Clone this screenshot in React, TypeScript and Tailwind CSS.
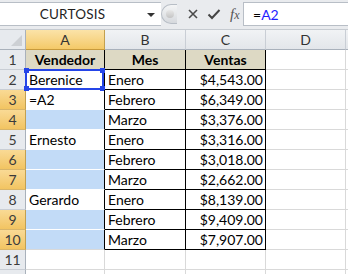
import React from "react";

type Row = {
  n: number;
  a: string;
  b: string;
  c: string;
  blue?: boolean;
  sel?: boolean;
};

const rows: Row[] = [
  { n: 2, a: "Berenice", b: "Enero", c: "$4,543.00" },
  { n: 3, a: "=A2", b: "Febrero", c: "$6,349.00", sel: true },
  { n: 4, a: "", b: "Marzo", c: "$3,376.00", blue: true, sel: true },
  { n: 5, a: "Ernesto", b: "Enero", c: "$3,316.00" },
  { n: 6, a: "", b: "Febrero", c: "$3,018.00", blue: true, sel: true },
  { n: 7, a: "", b: "Marzo", c: "$2,662.00", blue: true, sel: true },
  { n: 8, a: "Gerardo", b: "Enero", c: "$8,139.00" },
  { n: 9, a: "", b: "Febrero", c: "$9,409.00", blue: true, sel: true },
  { n: 10, a: "", b: "Marzo", c: "$7,907.00", blue: true, sel: true },
];

function RowHead({ n, sel }: { n: number | string; sel?: boolean }) {
  return (
    <div
      className={
        "w-[26px] shrink-0 h-full flex items-center justify-center border-r border-b text-[14px] text-[#3b3b3b] " +
        (sel
          ? "bg-gradient-to-b from-[#f9da95] to-[#f2c461] border-r-[#c2a050] border-b-[#d8b56a]"
          : "bg-[#e7eaee] border-r-[#a9b1bb] border-b-[#c9ced5]")
      }
    >
      {n}
    </div>
  );
}

export default function App() {
  return (
    <div
      className="w-[348px] h-[274px] overflow-hidden bg-white select-none"
      style={{ fontFamily: "Lato, 'Open Sans', sans-serif" }}
    >
      {/* formula bar */}
      <div className="h-[30px] bg-[#e9ebee] flex items-start pt-[2px] border-b border-[#c6cbd1]">
        <div className="w-[161px] h-[24px] bg-white border-y border-[#b8bec6] flex items-center relative">
          <span className="w-[145px] text-center text-[13.5px] text-[#1e1e1e] tracking-[0.2px]">
            CURTOSIS
          </span>
          <span className="absolute left-[147px] top-[10px] w-0 h-0 border-l-[4px] border-r-[4px] border-t-[4px] border-l-transparent border-r-transparent border-t-[#333]" />
        </div>
        <div className="w-[16px] h-[24px] flex items-center">
          <div className="w-[16px] h-[20px] rounded-l-full bg-gradient-to-b from-[#f4f5f6] to-[#d6d9dd] border border-[#b8bec6] border-r-0 flex items-center justify-center">
            <div className="w-[8px] h-[8px] rounded-full bg-gradient-to-b from-[#e8e8e8] to-[#c4c4c4]" />
          </div>
        </div>
        <div className="w-[66px] h-[24px] flex items-center">
          <svg width="12" height="12" viewBox="0 0 12 12" className="ml-[10px]">
            <path d="M2 2 L10 10 M10 2 L2 10" stroke="#4a4a4a" strokeWidth="1.6" />
          </svg>
          <svg width="14" height="12" viewBox="0 0 14 12" className="ml-[8px]">
            <path d="M1.5 6.5 L5 10 L12.5 2" stroke="#444" strokeWidth="2" fill="none" />
          </svg>
          <span
            className="ml-[9px] text-[15px] italic text-[#555] leading-none"
            style={{ fontFamily: "'Liberation Serif', serif" }}
          >
            f<span className="text-[12px]">x</span>
          </span>
        </div>
        <div className="flex-1 h-[24px] bg-white border border-r-0 border-[#b8bec6] flex items-center pl-[9px] text-[14px]">
          <span className="text-black">=</span>
          <span className="text-[#1f1fff]">A2</span>
        </div>
      </div>

      {/* column headers */}
      <div className="h-[20px] flex">
        <div className="w-[26px] shrink-0 h-full bg-[#e7eaee] border-r border-b border-[#a9b1bb] relative">
          <span className="absolute right-[3px] bottom-[3px] w-[11px] h-[11px] bg-[#cdd0d4] [clip-path:polygon(100%_0,100%_100%,0_100%)]" />
        </div>
        <div className="w-[79px] h-full flex items-center justify-center border-r border-b border-r-[#c2a050] border-b-[#c79a3c] bg-gradient-to-b from-[#fbe3a8] to-[#f4c967] text-[14px] text-[#333]">
          A
        </div>
        <div className="w-[81px] h-full flex items-center justify-center border-r border-b border-r-[#c9ced5] border-b-[#a9b1bb] bg-gradient-to-b from-[#f1f3f5] to-[#e3e6ea] text-[14px] text-[#333]">
          B
        </div>
        <div className="w-[80px] h-full flex items-center justify-center border-r border-b border-r-[#c9ced5] border-b-[#a9b1bb] bg-gradient-to-b from-[#f1f3f5] to-[#e3e6ea] text-[14px] text-[#333]">
          C
        </div>
        <div className="w-[80px] h-full flex items-center justify-center border-r border-b border-r-[#c9ced5] border-b-[#a9b1bb] bg-gradient-to-b from-[#f1f3f5] to-[#e3e6ea] text-[14px] text-[#333]">
          D
        </div>
        <div className="flex-1 h-full border-b border-[#a9b1bb] bg-gradient-to-b from-[#f1f3f5] to-[#e3e6ea]" />
      </div>

      {/* row 1: table header */}
      <div className="h-[20px] flex text-[14px]">
        <RowHead n={1} />
        <div className="w-[79px] h-full bg-[#ddd9c4] border-r border-b border-black flex items-center justify-center font-bold text-black">
          Vendedor
        </div>
        <div className="w-[81px] h-full bg-[#ddd9c4] border-r border-b border-black flex items-center justify-center font-bold text-black">
          Mes
        </div>
        <div className="w-[80px] h-full bg-[#ddd9c4] border-r border-b border-black flex items-center justify-center font-bold text-black">
          Ventas
        </div>
        <div className="w-[80px] h-full border-r border-b border-[#d9d9d9]" />
        <div className="flex-1 h-full border-b border-[#d9d9d9]" />
      </div>

      {rows.map((r) => (
        <div key={r.n} className="h-[20px] flex text-[14px] text-black">
          <RowHead n={r.n} sel={r.sel} />
          <div
            className={
              "w-[79px] h-full border-r border-r-black relative " +
              (r.n === 10 ? "border-b border-b-[#d9d9d9]" : "border-b border-b-white")
            }
          >
            <div
              className={
                "absolute inset-0 flex items-center pl-[3px] " +
                (r.blue ? "bg-[#c2dbf7]" : "")
              }
            >
              {r.a}
            </div>
            {r.n === 2 && (
              <div className="absolute left-[-1px] top-[-1px] right-[0px] bottom-[-1px] border-[2px] border-[#2545e8]">
                <span className="absolute left-[-3px] top-[-3px] w-[5px] h-[5px] bg-[#2545e8]" />
                <span className="absolute right-[-3px] top-[-3px] w-[5px] h-[5px] bg-[#2545e8]" />
                <span className="absolute left-[-3px] bottom-[-3px] w-[5px] h-[5px] bg-[#2545e8]" />
                <span className="absolute right-[-3px] bottom-[-3px] w-[5px] h-[5px] bg-[#2545e8]" />
              </div>
            )}
          </div>
          <div className="w-[81px] h-full border-r border-b border-black flex items-center pl-[3px]">
            {r.b}
          </div>
          <div className="w-[80px] h-full border-r border-b border-black flex items-center justify-end pr-[2px]">
            {r.c}
          </div>
          <div className="w-[80px] h-full border-r border-b border-[#d9d9d9]" />
          <div className="flex-1 h-full border-b border-[#d9d9d9]" />
        </div>
      ))}

      {[11, 12].map((n) => (
        <div key={n} className="h-[20px] flex text-[14px]">
          <RowHead n={n === 11 ? 11 : ""} />
          <div className="w-[79px] h-full border-r border-b border-[#d9d9d9]" />
          <div className="w-[81px] h-full border-r border-b border-[#d9d9d9]" />
          <div className="w-[80px] h-full border-r border-b border-[#d9d9d9]" />
          <div className="w-[80px] h-full border-r border-b border-[#d9d9d9]" />
          <div className="flex-1 h-full border-b border-[#d9d9d9]" />
        </div>
      ))}
    </div>
  );
}
